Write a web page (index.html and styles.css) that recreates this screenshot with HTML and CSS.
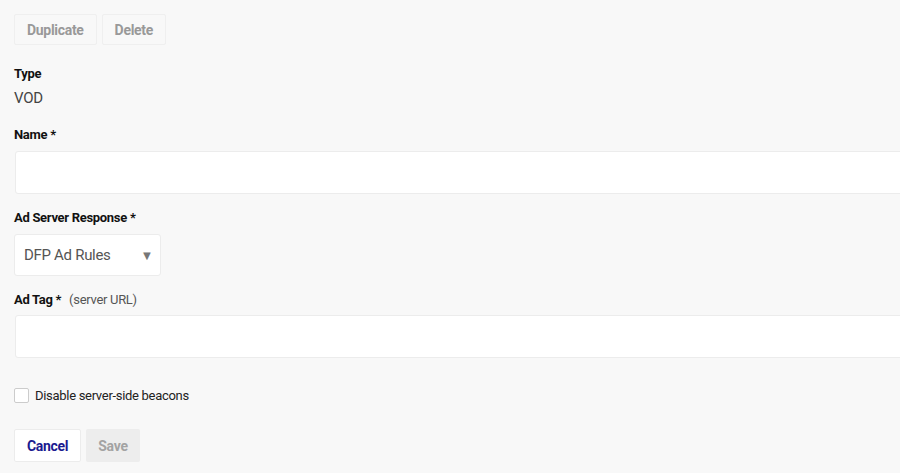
FILE: index.html
```html
<!DOCTYPE html>
<html lang="en">
<head>
  <meta charset="UTF-8">
  <meta name="viewport" content="width=device-width, initial-scale=1.0">
  <link rel="stylesheet" href="styles.css">
  <title>Ad config</title>
</head>
<body>
  <div class="page">
    <div class="toolbar">
      <button class="btn btn-ghost">Duplicate</button>
      <button class="btn btn-ghost">Delete</button>
    </div>

    <div class="field field-type">
      <div class="label">Type</div>
      <div class="value">VOD</div>
    </div>

    <div class="field field-name">
      <div class="label">Name *</div>
      <input class="text-input" type="text">
    </div>

    <div class="field">
      <div class="label">Ad Server Response *</div>
      <div class="select">
        <span>DFP Ad Rules</span>
        <span class="caret">&#9660;</span>
      </div>
    </div>

    <div class="field">
      <div class="label label-tag">Ad Tag * <span class="hint">(server URL)</span></div>
      <input class="text-input" type="text">
    </div>

    <label class="check">
      <span class="box"></span>
      Disable server-side beacons
    </label>

    <div class="actions">
      <button class="btn btn-cancel">Cancel</button>
      <button class="btn btn-save">Save</button>
    </div>
  </div>
</body>
</html>
```

FILE: styles.css
```css
body {
    margin: 0;
    background-color: #f8f8f8;
    font-family: Roboto, "Liberation Sans", sans-serif;
    letter-spacing: -0.3px;
    color: #222;
    overflow: hidden;
}

.page {
    padding: 14px 0 0 14px;
}

.toolbar {
    display: flex;
    gap: 5px;
}

.btn {
    font-family: inherit;
    letter-spacing: -0.3px;
    font-weight: 700;
    font-size: 14px;
    border-radius: 2px;
    padding: 0 12px;
    height: 31px;
    cursor: pointer;
}

.btn-ghost {
    background: #f8f8f8;
    border: 1px solid #efefef;
    color: #999;
}

.field {
    margin-top: 16px;
}

.field-type {
    margin-top: 21px;
}

.field-name {
    margin-top: 21px;
}

.label {
    font-size: 13px;
    line-height: 16px;
    font-weight: 700;
    color: #111;
    margin-bottom: 8px;
}

.label-tag {
    margin-bottom: 7px;
}

.hint {
    font-weight: 400;
    color: #555;
    margin-left: 5px;
}

.value {
    font-size: 15px;
    line-height: 16px;
    color: #444;
}

.text-input {
    display: block;
    box-sizing: border-box;
    width: 900px;
    height: 43px;
    margin-left: 1px;
    background: #fff;
    border: 1px solid #ececec;
    border-radius: 3px;
    outline: none;
}

.select {
    box-sizing: border-box;
    width: 147px;
    height: 42px;
    background: #fff;
    border: 1px solid #ececec;
    border-radius: 3px;
    display: flex;
    align-items: center;
    justify-content: space-between;
    padding: 0 7px 0 9px;
    font-size: 15px;
    color: #555;
}

.caret {
    font-size: 13px;
    color: #777;
}

.check {
    display: flex;
    align-items: center;
    gap: 6px;
    height: 16px;
    margin-top: 29px;
    font-size: 13px;
    color: #222;
}

.box {
    width: 13px;
    height: 13px;
    background: #fff;
    border: 1px solid #ccc;
    border-radius: 2px;
}

.actions {
    display: flex;
    gap: 5px;
    margin-top: 26px;
}

.btn-cancel {
    background: #fff;
    border: 1px solid #ececec;
    color: #1b1b8f;
    height: 33px;
}

.btn-save {
    background: #ededed;
    border: none;
    color: #a3a3a3;
    height: 33px;
}
```
